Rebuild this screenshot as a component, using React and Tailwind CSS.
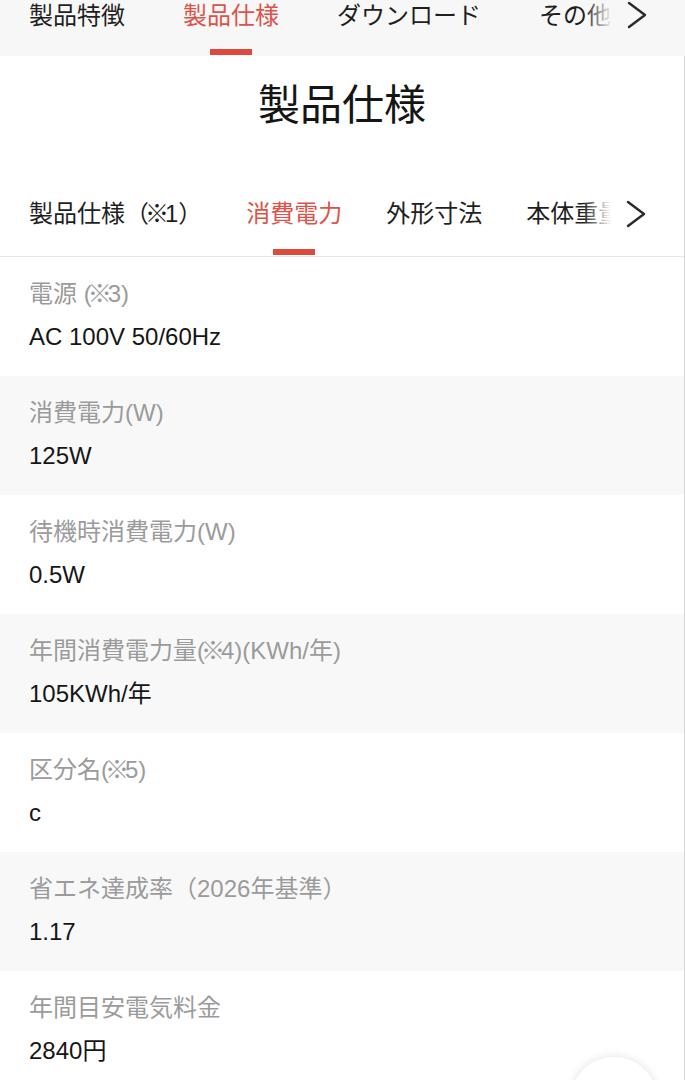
const TOP_TABS = ['製品特徴', '製品仕様', 'ダウンロード', 'その他'];
const SUB_TABS = ['製品仕様（※1）', '消費電力', '外形寸法', '本体重量'];

const SPECS = [
  { label: '電源 (※3)', value: 'AC 100V 50/60Hz' },
  { label: '消費電力(W)', value: '125W' },
  { label: '待機時消費電力(W)', value: '0.5W' },
  { label: '年間消費電力量(※4)(KWh/年)', value: '105KWh/年' },
  { label: '区分名(※5)', value: 'c' },
  { label: '省エネ達成率（2026年基準）', value: '1.17' },
  { label: '年間目安電気料金', value: '2840円' },
];

const font = { fontFamily: '"Liberation Sans", "Noto Sans CJK JP", sans-serif' };

// ※ renders full-width in Noto CJK; the reference sets it narrower
function Note({ text }) {
  const parts = text.split('※');
  return parts.map((p, i) => (
    <span key={i}>
      {i > 0 && <span className="mx-[-4px]">※</span>}
      {p}
    </span>
  ));
}

function Chevron({ className }) {
  return (
    <svg viewBox="0 0 22 28" className={className} fill="none" stroke="currentColor" strokeWidth="2.4" strokeLinecap="round" strokeLinejoin="round">
      <path d="M3 2 L19 14 L3 26" />
    </svg>
  );
}

function TabStrip({ tabs, active, gap, bg, fade, height, textTop, chevronTop }) {
  return (
    <div className={`relative overflow-hidden ${bg} ${height}`}>
      <div className={`flex whitespace-nowrap pl-[29px] ${gap}`}>
        {tabs.map((t, i) => (
          <div key={t} className={`relative flex flex-col items-center ${height}`}>
            <span
              className={`${textTop} text-[24px] leading-[32px] ${
                i === active ? 'text-[#dc5349]' : 'text-[#1f1f1f]'
              }`}
            >
              <Note text={t} />
            </span>
            {i === active && (
              <div className="absolute bottom-[1px] h-[6px] w-[42px] bg-[#dd4a3d]" />
            )}
          </div>
        ))}
      </div>
      {/* fade + chevron over the overflowing last tab */}
      <div className="absolute right-0 top-0 flex h-full">
        <div className={`w-[28px] bg-gradient-to-r from-transparent ${fade}`} />
        <div className={`relative w-[73px] ${bg}`}>
          <Chevron className={`absolute left-[14px] ${chevronTop} h-[28px] w-[22px] text-[#2a2a2a]`} />
        </div>
      </div>
    </div>
  );
}

export default function App() {
  return (
    <div className="relative min-h-screen bg-white" style={font}>
      {/* top section tabs */}
      <TabStrip
        tabs={TOP_TABS}
        active={1}
        gap="gap-[58px]"
        bg="bg-[#f7f7f7]"
        fade="to-[#f7f7f7]"
        height="h-[56px]"
        textTop="pt-0"
        chevronTop="top-[1px]"
      />

      <div className="border-r border-[#d6d6d6]">
        <h1 className="pt-[24px] text-center text-[42px] font-normal leading-[52px] text-[#151515]">
          製品仕様
        </h1>

        <div className="mt-[56px] border-b border-[#e6e6e6]">
          <TabStrip
            tabs={SUB_TABS}
            active={1}
            gap="gap-[44px]"
            bg="bg-white"
            fade="to-white"
            height="h-[68px]"
            textTop="pt-[10px]"
            chevronTop="top-[12px]"
          />
        </div>

        {SPECS.map((s, i) => (
          <div
            key={s.label}
            className={`px-[29px] pt-[21px] pb-[23px] ${i % 2 === 1 ? 'bg-[#f8f8f8]' : 'bg-white'}`}
          >
            <div className="text-[24px] leading-[32px] text-[#9b9b9b]">
              <Note text={s.label} />
            </div>
            <div className="mt-[11px] text-[24px] leading-[32px] text-[#161616]">{s.value}</div>
          </div>
        ))}
      </div>

      {/* floating round button, mostly below the fold */}
      <div className="fixed left-[570px] top-[1057px] h-[88px] w-[88px] rounded-full bg-white shadow-[0_0_10px_rgba(0,0,0,0.12)]" />
    </div>
  );
}
